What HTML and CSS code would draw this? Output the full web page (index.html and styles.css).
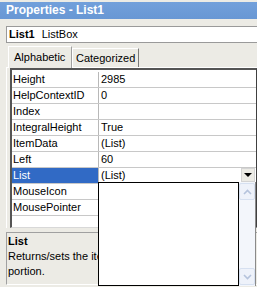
FILE: index.html
```html
<!DOCTYPE html>
<html lang="en">
<head>
    <meta charset="UTF-8">
    <title>Properties - List1</title>
    <link rel="stylesheet" href="styles.css">
</head>
<body>
    <div class="ventana">
        <div class="caption">Properties - List1</div>

        <div class="objsel"><b>List1</b> ListBox</div>

        <div class="tabs">
            <div class="tab active">Alphabetic</div>
            <div class="tab">Categorized</div>
        </div>

        <div class="page">
            <div class="grid">
                <div class="row"><div class="name">Height</div><div class="value">2985</div></div>
                <div class="row"><div class="name">HelpContextID</div><div class="value">0</div></div>
                <div class="row"><div class="name">Index</div><div class="value"></div></div>
                <div class="row"><div class="name">IntegralHeight</div><div class="value">True</div></div>
                <div class="row"><div class="name">ItemData</div><div class="value">(List)</div></div>
                <div class="row"><div class="name">Left</div><div class="value">60</div></div>
                <div class="row selected">
                    <div class="name">List</div>
                    <div class="value">
                        <span>(List)</span>
                        <span class="dropbtn"><span class="tri"></span></span>
                    </div>
                </div>
                <div class="row"><div class="name">MouseIcon</div><div class="value"></div></div>
                <div class="row"><div class="name">MousePointer</div><div class="value"></div></div>
                <div class="row"><div class="name"></div><div class="value"></div></div>
            </div>
        </div>

        <div class="desc">
            <b>List</b>
            <div>Returns/sets the items contained in a control's list<br>portion.</div>
        </div>

        <div class="caption">Form Layout</div>

        <!-- lista desplegable abierta sobre la cuadricula -->
        <div class="droplist"></div>
        <div class="scroll">
            <div class="sbtn"><svg width="9" height="6" viewBox="0 0 9 6"><path d="M1 5 L4.5 1.5 L8 5" fill="none" stroke="#b5c3dc" stroke-width="1.6"/></svg></div>
            <div class="track"></div>
            <div class="sbtn"><svg width="9" height="6" viewBox="0 0 9 6"><path d="M1 1 L4.5 4.5 L8 1" fill="none" stroke="#b5c3dc" stroke-width="1.6"/></svg></div>
        </div>
    </div>
</body>
</html>
```

FILE: styles.css
```css
body {
    margin: 0;
    background-color: #ecebe5;
    font-family: "Liberation Sans", Arial, sans-serif;
    font-size: 11px;
    color: #000;
    overflow: hidden;
}

.ventana {
    position: relative;
    width: 257px;
    height: 287px;
    overflow: hidden;
    padding-top: 2px;
    box-sizing: border-box;
}

.caption {
    height: 17px;
    line-height: 17px;
    padding-left: 6px;
    background: linear-gradient(#72a0db, #6897d4);
    color: white;
    font-weight: bold;
    font-size: 12px;
    white-space: nowrap;
}

.objsel {
    margin: 7px 0 0 6px;
    height: 17px;
    line-height: 15px;
    padding-left: 2px;
    background-color: white;
    border: 1px solid #9a9a9a;
    border-right: none;
    box-sizing: border-box;
}

.objsel b {
    margin-right: 4px;
}

.tabs {
    display: flex;
    align-items: flex-end;
    margin: 2px 0 0 8px;
    height: 22px;
}

.tab {
    height: 19px;
    line-height: 18px;
    border-left: 1px solid white;
    border-top: 1px solid white;
    border-right: 1px solid #7a7a7a;
    box-sizing: border-box;
    white-space: nowrap;
}

.tab.active {
    height: 22px;
    line-height: 21px;
    width: 64px;
    padding-left: 5px;
    margin-bottom: -1px;
    position: relative;
    background-color: #ecebe5;
    border-right: 1px solid #a0a0a0;
}

.tab:not(.active) {
    width: 67px;
    padding-left: 3px;
}

.page {
    border-top: 1px solid white;
    border-left: 1px solid white;
    margin-left: 6px;
    padding-left: 3px;
}

.grid {
    height: 155px;
    overflow: hidden;
    background-color: white;
    border-top: 2px solid #555;
    border-left: 2px solid #555;
    border-right: 1px solid #404040;
    border-bottom: 1px solid #d8d8d8;
    padding-top: 2px;
}

.row {
    display: flex;
    height: 16px;
    border-bottom: 1px solid #c8c8c8;
    box-sizing: border-box;
    line-height: 15px;
}

.name {
    width: 85px;
    padding-left: 1px;
    border-right: 1px solid #b8b8b8;
    white-space: nowrap;
    overflow: hidden;
}

.value {
    flex: 1;
    display: flex;
    justify-content: space-between;
    padding-left: 2px;
}

.row.selected .name {
    background-color: #316ac5;
    color: white;
}

.dropbtn {
    width: 14px;
    height: 14px;
    margin: 0 1px 0 0;
    background-color: #ecebe5;
    border: 1px solid #d4d4d4;
    box-sizing: border-box;
    display: flex;
    align-items: center;
    justify-content: center;
}

.tri {
    width: 0;
    height: 0;
    border-left: 4px solid transparent;
    border-right: 4px solid transparent;
    border-top: 4px solid black;
}

.desc {
    margin: 4px 0 0 6px;
    height: 50px;
    padding: 1px 0 0 1px;
    border-top: 1px solid #a0a0a0;
    border-left: 1px solid #a0a0a0;
    border-bottom: 1px solid white;
    line-height: 15px;
    white-space: nowrap;
    margin-bottom: 2px;
}

.desc b {
    display: block;
}

.droplist {
    position: absolute;
    left: 98px;
    top: 182px;
    width: 141px;
    height: 104px;
    background-color: white;
    border: 1px solid black;
    box-sizing: border-box;
}

.scroll {
    position: absolute;
    left: 239px;
    top: 182px;
    width: 17px;
    height: 104px;
    display: flex;
    flex-direction: column;
    background-color: #f3f6fb;
    border-right: 1px solid #8a8a8a;
    box-sizing: border-box;
}

.sbtn {
    height: 15px;
    margin: 1px 0;
    background-color: #eef2fa;
    border: 1px solid #d6e0f0;
    border-radius: 2px;
    display: flex;
    align-items: center;
    justify-content: center;
}

.track {
    flex: 1;
}
```
